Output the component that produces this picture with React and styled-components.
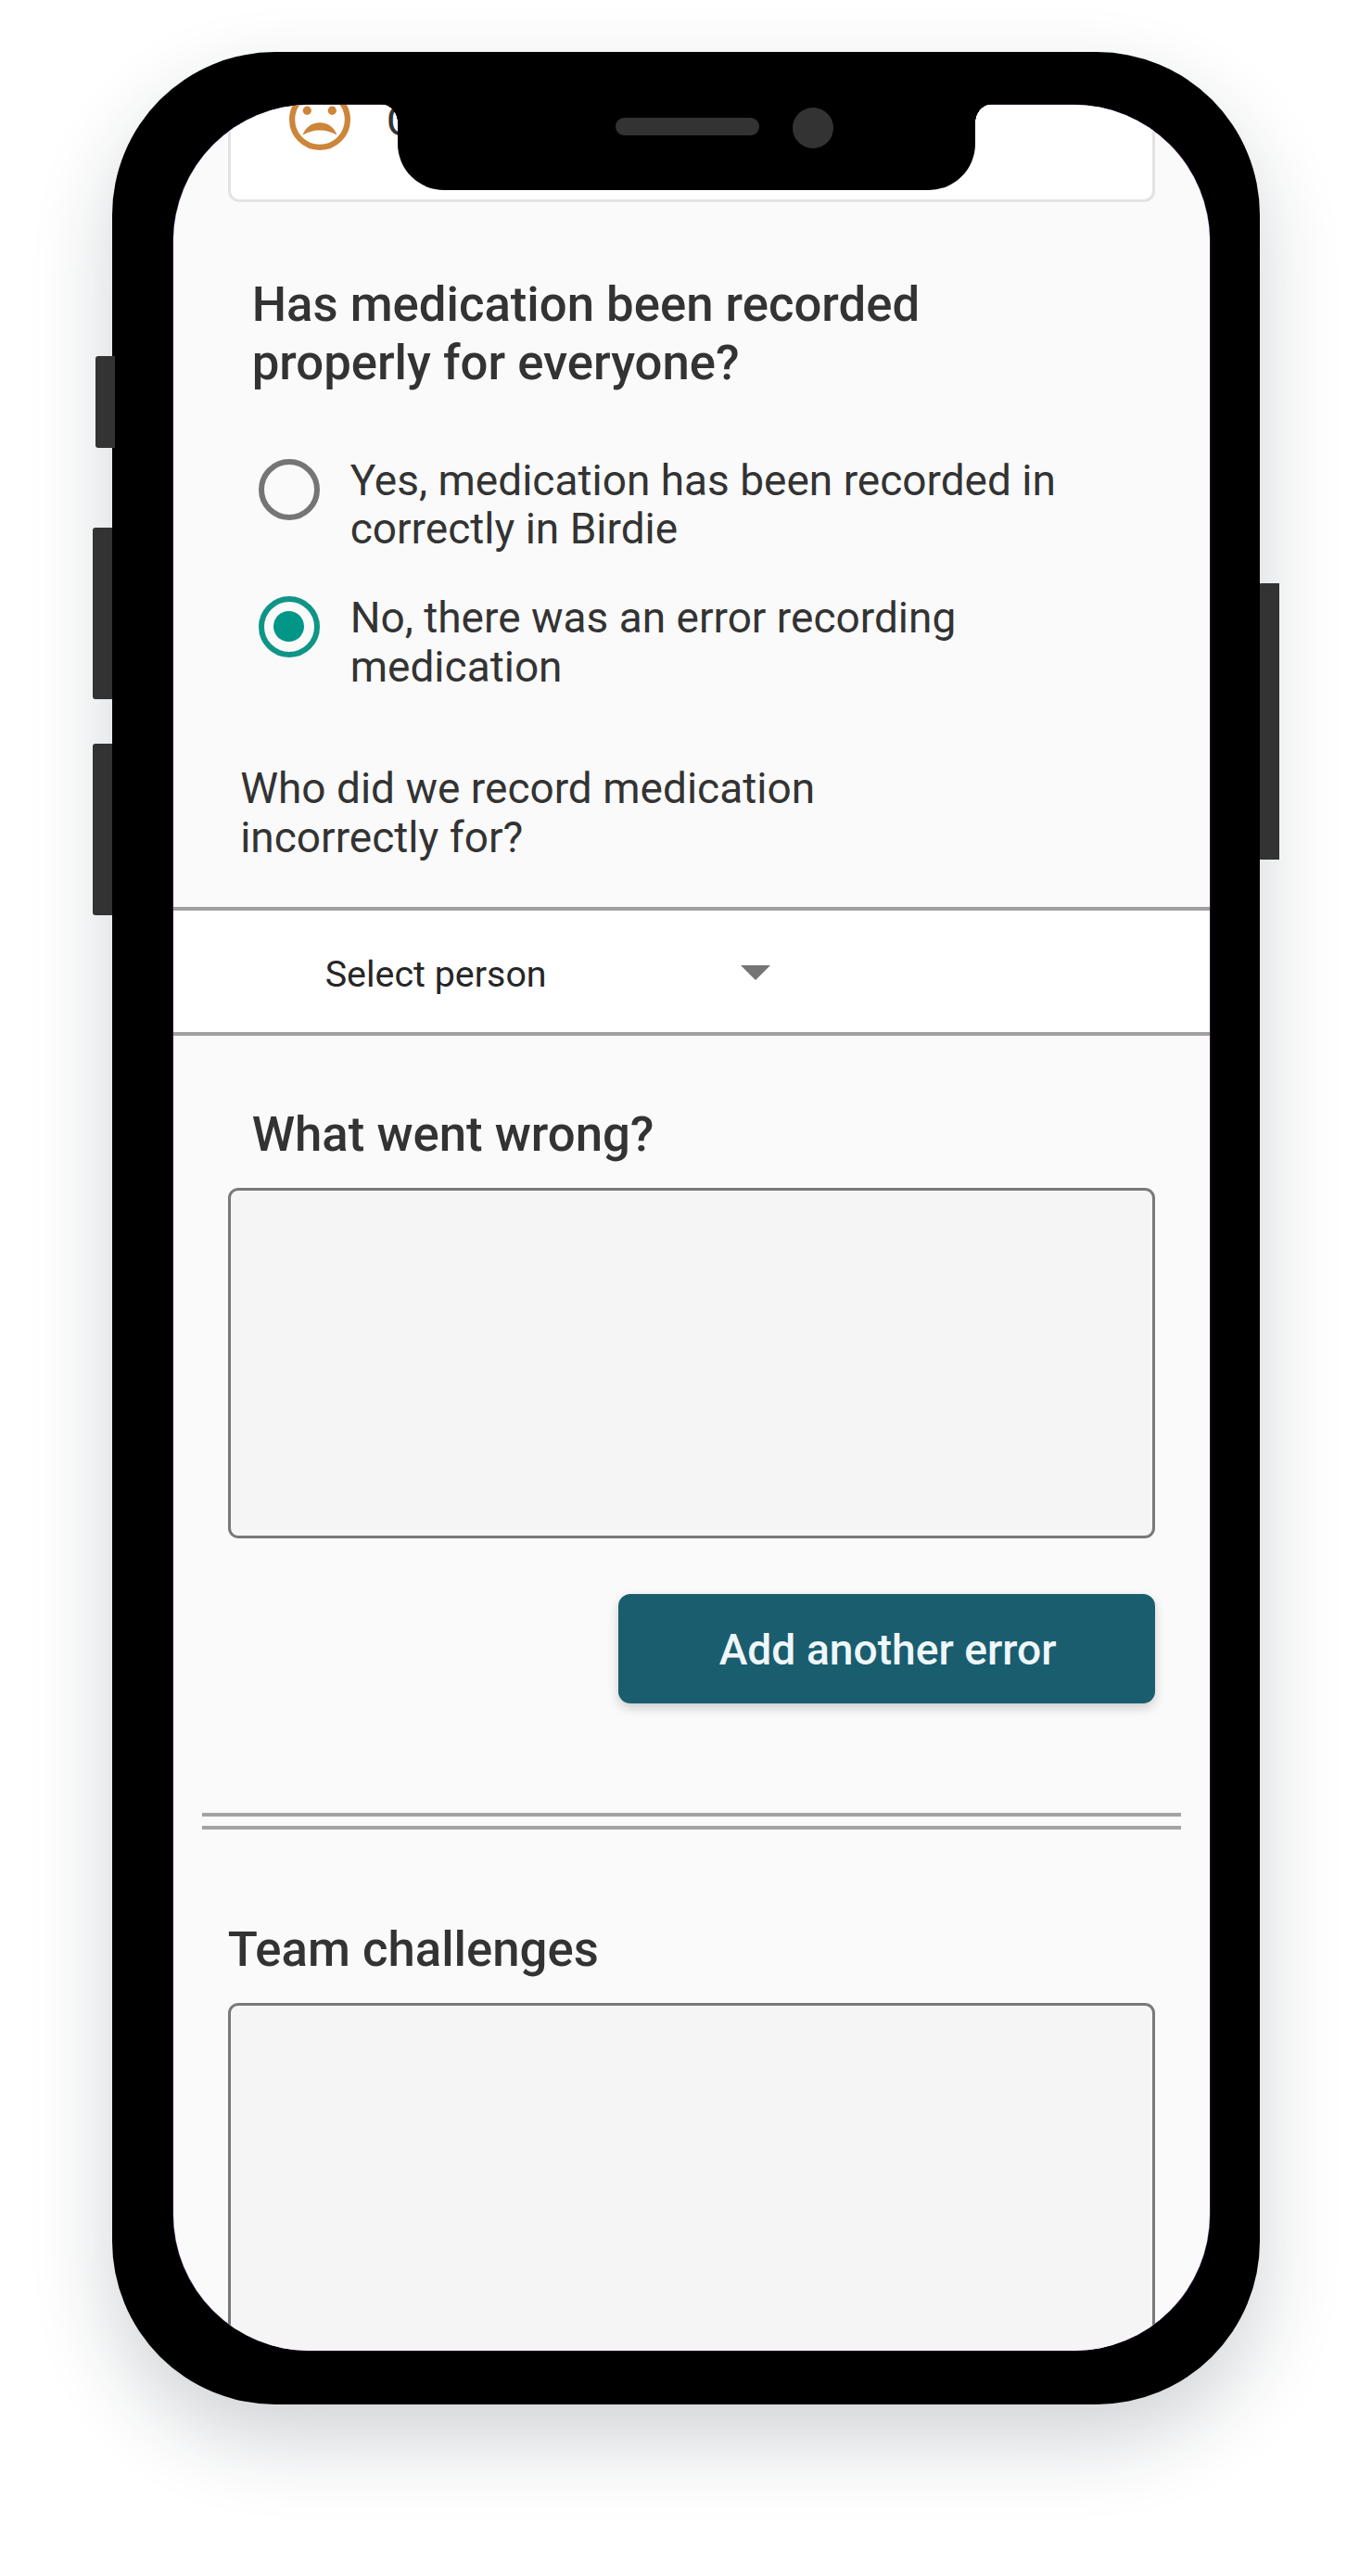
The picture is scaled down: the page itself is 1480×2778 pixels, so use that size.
import React from "react";
import styled, { createGlobalStyle } from "styled-components";

const GlobalStyle = createGlobalStyle`
  *, *::before, *::after { box-sizing: border-box; }
  body { margin: 0; background: #fff; font-family: Roboto, "Liberation Sans", sans-serif; }
`;

const Stage = styled.main`
  display: flex;
  justify-content: center;
  align-items: flex-start;
  width: 1480px;
  height: 2778px;
  padding-top: 56px;
  overflow: hidden;
`;

const Rail = styled.div`
  position: relative;
  z-index: ${(p) => (p.$above ? 1 : 0)};
  display: flex;
  flex-direction: column;
  align-items: flex-start;
  width: 21px;
  padding-top: ${(p) => p.$top}px;
`;

const SideKey = styled.span`
  width: 21px;
  height: ${(p) => p.$height}px;
  margin: 0 0 ${(p) => p.$after || 0}px ${(p) => p.$inset || 0}px;
  border-radius: ${(p) => (p.$right ? "1px 0 0 1px" : "3px 0 0 3px")};
  background: #333;
`;

const Body = styled.div`
  position: relative;
  flex: none;
  width: 1238px;
  height: 2536.5px;
  padding: 56.6px 54px 57px 65.7px;
  border-radius: 176px;
  background: #000;
  box-shadow: 0 38px 88px rgba(20, 34, 48, 0.2);
`;

const Screen = styled.div`
  width: 1118.3px;
  height: 2422.9px;
  overflow: hidden;
  border-radius: 147px;
  background: #fafafa;
  color: #333;
  box-shadow: 0 0 0 0.6px #4d2a5c;
`;

const Notch = styled.div`
  position: absolute;
  top: 50px;
  left: 307.5px;
  width: 623px;
  height: 98.7px;
  border-radius: 0 0 50px 50px;
  background: #000;

  &::before,
  &::after {
    content: "";
    position: absolute;
    top: 6.4px;
    width: 19px;
    height: 20px;
  }
  &::before {
    right: 100%;
    background: radial-gradient(ellipse 19px 20px at 0 100%, transparent 98%, #000 100%);
  }
  &::after {
    left: 100%;
    background: radial-gradient(ellipse 19px 20px at 100% 100%, transparent 98%, #000 100%);
  }
`;

const Sensors = styled.div`
  display: flex;
  align-items: center;
  gap: 36px;
  padding: 9.7px 0 0 235.3px;
`;

const Speaker = styled.span`
  width: 155px;
  height: 18.6px;
  margin-top: -3px;
  border-radius: 9.3px;
  background: #333;
`;

const Camera = styled.span`
  width: 44.6px;
  height: 44.6px;
  border-radius: 50%;
  background: #333;
`;

const MoodCard = styled.div`
  display: flex;
  align-items: flex-start;
  gap: 39px;
  width: 1000px;
  height: 105.4px;
  margin-left: 59px;
  padding-left: 63px;
  border: solid #e3e3e3;
  border-width: 0 3px 3px;
  border-radius: 0 0 12px 12px;
  background: #fff;
`;

const MoodFace = styled.svg`
  flex: none;
  width: 66px;
  height: 66px;
  margin-top: -16.6px;
`;

const MoodLabel = styled.span`
  margin-top: -9px;
  font-size: 46px;
  line-height: 53px;
`;

const Heading = styled.h2`
  width: 760px;
  margin: ${(p) => p.$top}px 0 0 ${(p) => p.$left}px;
  font-size: 52.7px;
  font-weight: 500;
  line-height: 62.8px;
`;

const Options = styled.div`
  display: flex;
  flex-direction: column;
  gap: 43px;
  margin: 69.2px 0 0 92px;
`;

const Option = styled.label`
  display: flex;
  align-items: flex-start;
  gap: 33px;
  font-size: 46px;
  line-height: 52.7px;
`;

const OptionText = styled.span`
  width: 790px;
`;

const Radio = styled.span`
  display: flex;
  flex: none;
  align-items: center;
  justify-content: center;
  width: 66px;
  height: 66px;
  margin-top: 2.8px;
  border: 6.6px solid ${(p) => (p.$on ? "#0f9587" : "#757575")};
  border-radius: 50%;

  &::after {
    content: "";
    width: 33px;
    height: 33px;
    border-radius: 50%;
    background: ${(p) => (p.$on ? "#009688" : "transparent")};
  }
`;

const Question = styled.p`
  width: 700px;
  margin: 78.6px 0 0 72.5px;
  font-size: 46px;
  line-height: 52.7px;
`;

const PersonSelect = styled.div`
  display: flex;
  align-items: center;
  height: 139px;
  margin-top: 48.4px;
  padding-left: 164px;
  border: solid #a0a0a0;
  border-width: 4px 0;
  background: #fff;
  color: #262626;
  font-size: 39.4px;
  line-height: 46px;
`;

const SelectValue = styled.span`
  width: 448px;
  padding-top: 8px;
`;

const Caret = styled.span`
  margin-top: 3px;
  border: solid transparent;
  border-width: 16px 16px 0;
  border-top-color: #757575;
`;

const NoteBox = styled.div`
  width: 1000px;
  height: ${(p) => p.$height}px;
  margin: ${(p) => p.$top}px 0 0 59px;
  border: 3px solid #797979;
  border-radius: 11px;
  background: #f5f5f5;
`;

const AddButton = styled.button`
  display: block;
  width: 579px;
  height: 118.6px;
  margin: 59.6px 0 0 480px;
  padding: 2px 0 0 3px;
  border: 0;
  border-radius: 13px;
  background: #1a5d6f;
  box-shadow: 0 5px 12px rgba(0, 0, 0, 0.18);
  color: #eff7fa;
  font: 500 46.2px/53px Roboto, "Liberation Sans", sans-serif;
`;

const Divider = styled.hr`
  width: 1056px;
  height: 18px;
  margin: 117.8px 0 0 31px;
  border: solid #a3a3a3;
  border-width: 4px 0;
`;

const SadFace = () => (
  <MoodFace viewBox="0 0 66 66" fill="#cd853a">
    <circle cx="33" cy="33" r="29.9" fill="none" stroke="#cd853a" strokeWidth="6.2" />
    <ellipse cx="19.3" cy="23.3" rx="4.6" ry="4.7" />
    <ellipse cx="46.3" cy="23.3" rx="4.6" ry="4.7" />
    <path d="M14.5 49.7C17.5 41.5 24 36.3 33 36.3S48.5 41.5 51.5 49.7C46 46.5 40 44.5 33 44.5S20 46.5 14.5 49.7Z" />
  </MoodFace>
);

export default function App() {
  return (
    <>
      <GlobalStyle />
      <Stage>
        <Rail $above $top={328}>
          <SideKey $height={99} $after={86} $inset={3} />
          <SideKey $height={185} $after={48} />
          <SideKey $height={184.7} />
        </Rail>
        <Body>
          <Screen>
            <MoodCard>
              <SadFace />
              <MoodLabel>C</MoodLabel>
            </MoodCard>
            <Heading $top={79} $left={85}>
              Has medication been recorded properly for everyone?
            </Heading>
            <Options>
              <Option>
                <Radio />
                <OptionText>Yes, medication has been recorded in correctly in Birdie</OptionText>
              </Option>
              <Option>
                <Radio $on />
                <OptionText>No, there was an error recording medication</OptionText>
              </Option>
            </Options>
            <Question>Who did we record medication incorrectly for?</Question>
            <PersonSelect>
              <SelectValue>Select person</SelectValue>
              <Caret />
            </PersonSelect>
            <Heading $top={75} $left={85}>What went wrong?</Heading>
            <NoteBox $top={26.4} $height={378} />
            <AddButton>Add another error</AddButton>
            <Divider />
            <Heading $top={97.5} $left={59}>Team challenges</Heading>
            <NoteBox $top={26.2} $height={420} />
          </Screen>
          <Notch>
            <Sensors>
              <Speaker />
              <Camera />
            </Sensors>
          </Notch>
        </Body>
        <Rail $top={573}>
          <SideKey $right $height={298} />
        </Rail>
      </Stage>
    </>
  );
}
